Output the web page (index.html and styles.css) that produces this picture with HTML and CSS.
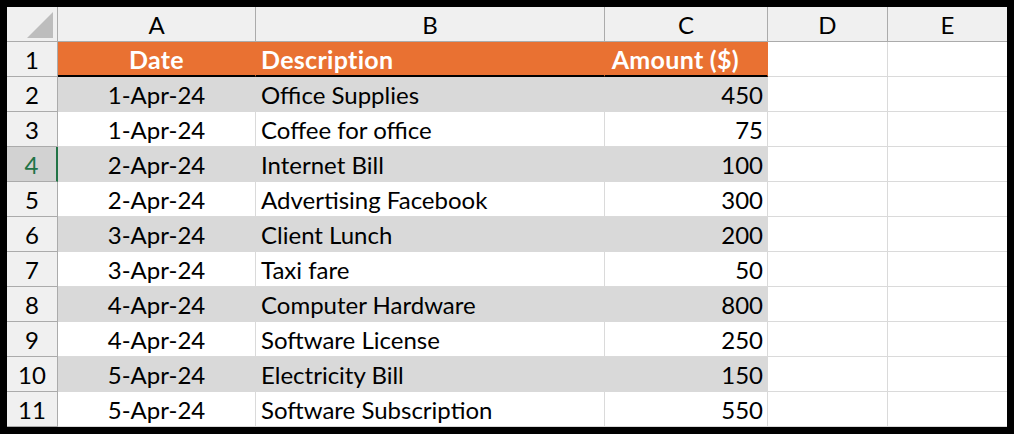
FILE: index.html
```html
<!DOCTYPE html>
<html>
<head>
<meta charset="utf-8">
<link rel="stylesheet" href="styles.css">
</head>
<body>
<div class="frame">
  <div class="sheet">
    <div class="corner"><span class="tri"></span></div>
    <div class="colhdr">A</div>
    <div class="colhdr">B</div>
    <div class="colhdr">C</div>
    <div class="colhdr">D</div>
    <div class="colhdr last">E</div>

    <div class="rowhdr">1</div>
    <div class="cell th center">Date</div>
    <div class="cell th left">Description</div>
    <div class="cell th right amt">Amount ($)</div>
    <div class="cell"></div>
    <div class="cell last"></div>

    <div class="rowhdr">2</div>
    <div class="cell band center">1-Apr-24</div>
    <div class="cell band left">Office Supplies</div>
    <div class="cell band right">450</div>
    <div class="cell"></div>
    <div class="cell last"></div>

    <div class="rowhdr">3</div>
    <div class="cell center">1-Apr-24</div>
    <div class="cell left">Coffee for office</div>
    <div class="cell right">75</div>
    <div class="cell"></div>
    <div class="cell last"></div>

    <div class="rowhdr active">4</div>
    <div class="cell band center">2-Apr-24</div>
    <div class="cell band left">Internet Bill</div>
    <div class="cell band right">100</div>
    <div class="cell"></div>
    <div class="cell last"></div>

    <div class="rowhdr">5</div>
    <div class="cell center">2-Apr-24</div>
    <div class="cell left">Advertising Facebook</div>
    <div class="cell right">300</div>
    <div class="cell"></div>
    <div class="cell last"></div>

    <div class="rowhdr">6</div>
    <div class="cell band center">3-Apr-24</div>
    <div class="cell band left">Client Lunch</div>
    <div class="cell band right">200</div>
    <div class="cell"></div>
    <div class="cell last"></div>

    <div class="rowhdr">7</div>
    <div class="cell center">3-Apr-24</div>
    <div class="cell left">Taxi fare</div>
    <div class="cell right">50</div>
    <div class="cell"></div>
    <div class="cell last"></div>

    <div class="rowhdr">8</div>
    <div class="cell band center">4-Apr-24</div>
    <div class="cell band left">Computer Hardware</div>
    <div class="cell band right">800</div>
    <div class="cell"></div>
    <div class="cell last"></div>

    <div class="rowhdr">9</div>
    <div class="cell center">4-Apr-24</div>
    <div class="cell left">Software License</div>
    <div class="cell right">250</div>
    <div class="cell"></div>
    <div class="cell last"></div>

    <div class="rowhdr">10</div>
    <div class="cell band center">5-Apr-24</div>
    <div class="cell band left">Electricity Bill</div>
    <div class="cell band right">150</div>
    <div class="cell"></div>
    <div class="cell last"></div>

    <div class="rowhdr">11</div>
    <div class="cell center">5-Apr-24</div>
    <div class="cell left">Software Subscription</div>
    <div class="cell right">550</div>
    <div class="cell"></div>
    <div class="cell last"></div>
  </div>
</div>
</body>
</html>
```

FILE: styles.css
```css
* { box-sizing: border-box; }
html, body { margin: 0; padding: 0; background: #000; }
body {
  width: 1014px;
  height: 434px;
  font-family: Lato, "Open Sans", "Liberation Sans", sans-serif;
  color: #000;
}
.frame {
  width: 1014px;
  height: 434px;
  border: 7px solid #000;
  background: #fff;
}
.sheet {
  display: grid;
  grid-template-columns: 51px 198px 349px 163px 120px 119px;
  grid-template-rows: repeat(12, 35px);
  width: 1000px;
  height: 420px;
  overflow: hidden;
}
.corner {
  position: relative;
  background: #f0f0f0;
  border-right: 1px solid #ababab;
  border-bottom: 1px solid #ababab;
}
.tri {
  position: absolute;
  left: 20px;
  top: 5px;
  width: 0;
  height: 0;
  border-left: 26px solid transparent;
  border-bottom: 26px solid #bdbdbd;
}
.colhdr {
  background: #f0f0f0;
  border-right: 1px solid #ababab;
  border-bottom: 1px solid #ababab;
  display: flex;
  align-items: center;
  justify-content: center;
  font-size: 24px;
  padding-top: 1px;
}
.colhdr.last { border-right: none; }
.rowhdr {
  background: #f0f0f0;
  border-right: 1px solid #ababab;
  border-bottom: 1px solid #ababab;
  display: flex;
  align-items: center;
  justify-content: center;
  font-size: 24px;
  padding-top: 1px;
}
.rowhdr.active {
  background: #d2d2d2;
  color: #217346;
  border-right: 2px solid #217346;
}
.cell {
  background: #fff;
  border-right: 1px solid #dadada;
  border-bottom: 1px solid #dadada;
  display: flex;
  align-items: center;
  font-size: 24px;
  white-space: nowrap;
  padding-top: 1px;
}
.cell.last { border-right: none; }
.center { justify-content: center; }
.left { justify-content: flex-start; padding-left: 5px; }
.right { justify-content: flex-end; padding-right: 4px; }
.band {
  background: #d9d9d9;
  border-right-color: #d9d9d9;
  border-bottom-color: #d9d9d9;
}
.th {
  background: #e97132;
  color: #fff;
  font-weight: 700;
  font-size: 25px;
  letter-spacing: 0.3px;
  border-right-color: #e97132;
  border-bottom: 2px solid #000;
}
.th.amt { padding-right: 28px; }
```
